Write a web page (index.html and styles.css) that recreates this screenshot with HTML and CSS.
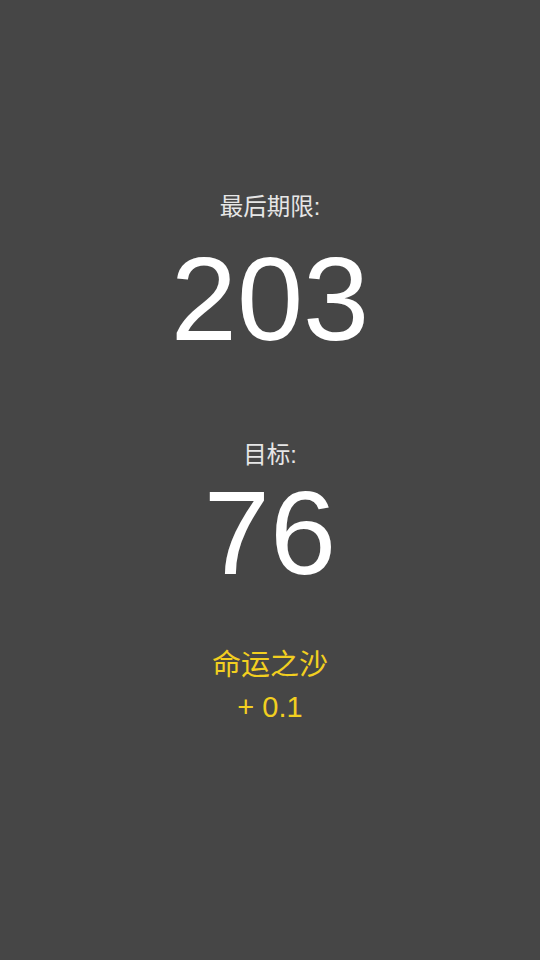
FILE: index.html
```html
<!DOCTYPE html>
<html lang="zh">
<head>
<meta charset="UTF-8">
<meta name="viewport" content="width=device-width, initial-scale=1.0">
<title>命运之沙</title>
<link rel="stylesheet" href="styles.css">
</head>
<body>
<div class="container">
<div class="label">最后期限:</div>
<div class="number deadline">203</div>
<div class="label target-label">目标:</div>
<div class="number target">76</div>
<div class="fate">
<div>命运之沙</div>
<div>+ 0.1</div>
</div>
</div>
</body>
</html>
```

FILE: styles.css
```css
html, body {
  margin: 0;
  padding: 0;
  height: 100%;
  background-color: #464646;
  font-family: "Liberation Sans", Arial, "Noto Sans CJK SC", sans-serif;
}

.container {
  display: flex;
  flex-direction: column;
  align-items: center;
  padding-top: 195px;
  text-align: center;
}

.label {
  color: #e6e6e6;
  font-size: 23.5px;
  line-height: 24px;
}

.number {
  color: #ffffff;
  font-size: 119px;
  line-height: 133px;
}

.deadline {
  margin-top: 13px;
}

.target-label {
  margin-top: 79px;
  line-height: 22px;
}

.target {
  margin-top: 0;
}

.fate {
  margin-top: 45px;
  color: #f2cf20;
  font-size: 29px;
  line-height: 42px;
}
```
